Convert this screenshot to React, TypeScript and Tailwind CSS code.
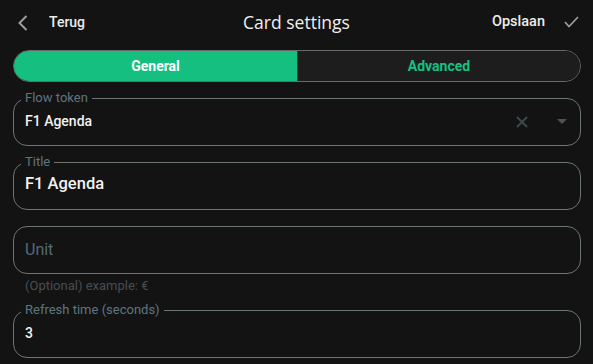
import React, { useState } from 'react'

const Field = ({ label, value, big, right }: { label: string; value: string; big?: boolean; right?: React.ReactNode }) => {
   return (
      <fieldset className="h-[56px] border border-[#6b7572] rounded-[14px] px-[11px] m-0 min-w-0">
         <legend className="-ml-[4px] px-[4px] text-[13px] leading-4 text-[#5e7680]">{label}</legend>
         <div className={big ? 'flex items-center h-[29px]' : 'flex items-center h-[31px]'}>
            <span className={big ? 'flex-1 text-[16.5px] font-medium text-[#f2f2f2]' : 'flex-1 text-[14px] font-medium text-[#f2f2f2]'}>
               {value}
            </span>
            {right}
         </div>
      </fieldset>
   )
}

const App = () => {
   const [tab, setTab] = useState('general')

   return (
      <div className="w-[593px] h-[364px] overflow-hidden bg-[#131313] font-['Roboto',sans-serif]">
         <div className="grid grid-cols-[1fr_auto_1fr] items-center h-[44px]">
            <div className="flex items-center pl-[18px]">
               <svg width="10" height="16" viewBox="0 0 10 16" className="mt-[1px]">
                  <polyline points="8.5,1 1.5,8 8.5,15" fill="none" stroke="#9c9c9c" strokeWidth="2" />
               </svg>
               <span className="ml-[21px] text-[14px] font-medium text-[#ececec]">Terug</span>
            </div>
            <span className="text-[17.5px] text-[#f0f0f0] font-['Open_Sans',sans-serif]">Card settings</span>
            <div className="flex items-center justify-end pr-[14px]">
               <span className="text-[14.5px] font-medium text-[#ececec]">Opslaan</span>
               <svg width="15" height="12" viewBox="0 0 15 12" className="ml-[19px]">
                  <polyline points="1,6 5,10.5 14,1" fill="none" stroke="#9c9c9c" strokeWidth="1.7" />
               </svg>
            </div>
         </div>

         <div className="ml-[13px] mr-[12px] mt-[6px] flex h-[32px] rounded-full border border-[#666b69] overflow-hidden">
            <button
               onClick={() => setTab('general')}
               className="w-[284px] bg-[#14bf80] text-white text-[14px] font-bold border-r border-[#3a3a3a]"
            >
               General
            </button>
            <button
               onClick={() => setTab('advanced')}
               className="flex-1 bg-[#1d1d1d] text-[#16c083] text-[14px] font-bold"
            >
               Advanced
            </button>
         </div>

         <div className="ml-[13px] mr-[12px] mt-[8px] flex flex-col">
            <Field
               label="Flow token"
               value="F1 Agenda"
               right={
                  <div className="flex items-center">
                     <svg width="12" height="12" viewBox="0 0 12 12">
                        <path d="M1 1 11 11M11 1 1 11" stroke="#3e4a4a" strokeWidth="1.8" />
                     </svg>
                     <svg width="10" height="5" viewBox="0 0 10 5" className="ml-[29px] mr-[2px]">
                        <path d="M0 0h10L5 5z" fill="#4a5555" />
                     </svg>
                  </div>
               }
            />
            <div className="mt-[8px]">
               <Field label="Title" value="F1 Agenda" big />
            </div>
            <div className="mt-[16px] h-[48px] rounded-[14px] border border-[#6b7572] flex items-center px-[11px]">
               <span className="text-[16px] text-[#566c74]">Unit</span>
            </div>
            <div className="mt-[4px] ml-[12px] text-[13px] leading-4 text-[#474e50]">(Optional) example: €</div>
            <div className="mt-[8px]">
               <Field label="Refresh time (seconds)" value="3" />
            </div>
         </div>
      </div>
   )
}

export default App
